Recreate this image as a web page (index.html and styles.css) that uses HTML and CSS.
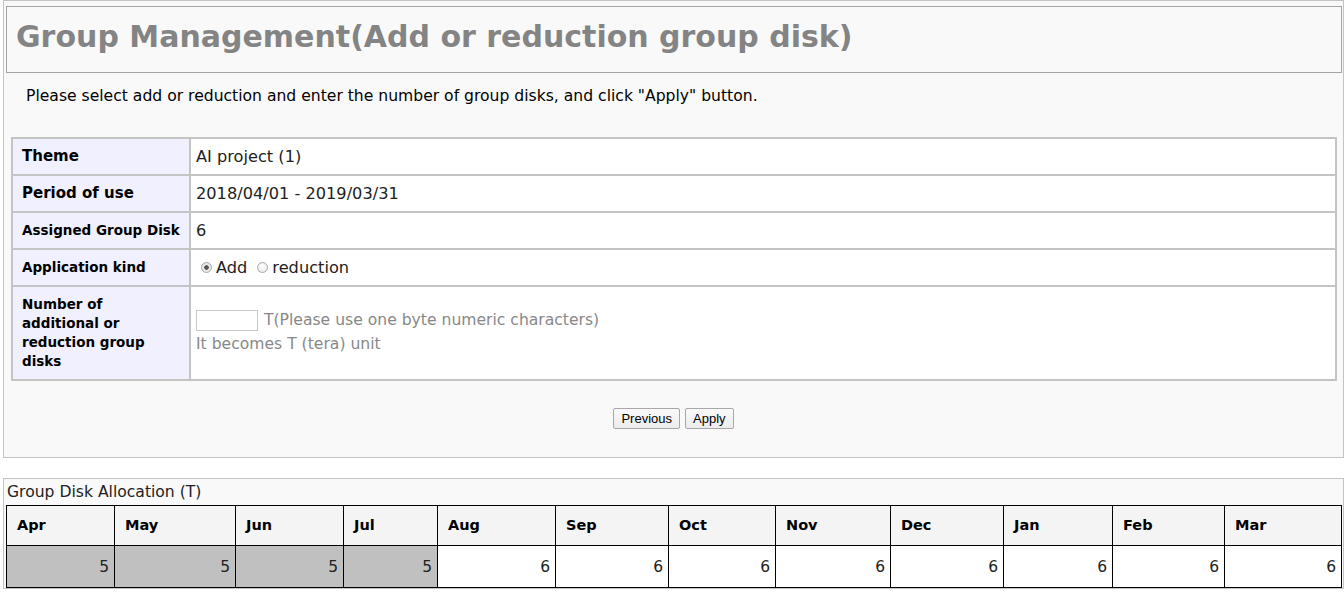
FILE: index.html
```html
<!DOCTYPE html>
<html lang="en">
<head>
<meta charset="utf-8">
<title>Group Management</title>
<link rel="stylesheet" href="styles.css">
</head>
<body>
<div class="panel main">
  <div class="title-box"><h1 class="title">Group Management(Add or reduction group disk)</h1></div>
  <p class="lead">Please select add or reduction and enter the number of group disks, and click "Apply" button.</p>
  <table class="form">
    <tr><th class="lg">Theme</th><td>AI project (1)</td></tr>
    <tr><th class="lg">Period of use</th><td>2018/04/01 - 2019/03/31</td></tr>
    <tr><th>Assigned Group Disk</th><td>6</td></tr>
    <tr><th>Application kind</th><td><label class="opt"><input type="radio" name="kind" class="radio" checked>Add</label><label class="opt"><input type="radio" name="kind" class="radio">reduction</label></td></tr>
    <tr><th class="multi">Number of<br>additional or<br>reduction group<br>disks</th>
      <td class="note"><div class="num-line"><input type="text" class="num">T(Please use one byte numeric characters)</div><div>It becomes T (tera) unit</div></td></tr>
  </table>
  <div class="actions"><button class="btn">Previous</button><button class="btn">Apply</button></div>
</div>
<div class="panel alloc">
  <div class="caption">Group Disk Allocation (T)</div>
  <table class="months">
    <colgroup><col><col><col><col><col><col><col><col><col><col><col><col></colgroup>
    <tr><th>Apr</th><th>May</th><th>Jun</th><th>Jul</th><th>Aug</th><th>Sep</th><th>Oct</th><th>Nov</th><th>Dec</th><th>Jan</th><th>Feb</th><th>Mar</th></tr>
    <tr><td class="past">5</td><td class="past">5</td><td class="past">5</td><td class="past">5</td><td>6</td><td>6</td><td>6</td><td>6</td><td>6</td><td>6</td><td>6</td><td>6</td></tr>
  </table>
</div>
</body>
</html>
```
FILE: styles.css
```css
html, body { margin: 0; padding: 0; background: #fff; }
body { font-family: "DejaVu Sans", Verdana, sans-serif; color: #000; }

.panel {
  margin-left: 3px;
  width: calc(100% - 3px);
  box-sizing: border-box;
  border: 1px solid #c4c4c4;
  background: #f9f9f9;
}

.main { padding-bottom: 28px; }

.title-box {
  margin: 5px 1px 0 2px;
  border: 1px solid #a4a4a4;
  box-sizing: content-box;
  display: flex;
  align-items: center;
  padding: 0 0 6px 9px;
  height: 59px;
}
.title {
  margin: 0;
  font-size: 30px;
  font-weight: bold;
  color: #848484;
  line-height: 36px;
}

.lead {
  margin: 13px 0 0 22px;
  font-size: 15.6px;
  line-height: 20px;
}

.form {
  margin: 31px 0 0 7px;
  width: calc(100% - 13px);
  border: 1px solid #c4c4c4;
  border-spacing: 0;
  background: #fff;
}
.form th, .form td {
  border: 1px solid #c4c4c4;
  line-height: 19px;
  padding: 8px 5px;
  text-align: left;
  vertical-align: middle;
}
.form th {
  box-sizing: border-box;
  width: 178px;
  background: #f0f0ff;
  font-size: 13.5px;
  font-weight: bold;
  padding-left: 9px;
}
.form th.lg { font-size: 15px; }
.form td { font-size: 16.2px; color: #222; }

.opt { display: inline-flex; align-items: center; margin-right: 5px; }
.radio {
  appearance: none;
  -webkit-appearance: none;
  width: 11px; height: 11px;
  margin: 0 4px 0 5px;
  border: 1px solid #a8a8a8;
  border-radius: 50%;
  background: radial-gradient(circle at 50% 40%, #fff, #e4e4e4);
  box-sizing: border-box;
}
.radio:checked {
  background: radial-gradient(circle, #555 0 2px, #e8e8e8 2.5px);
}

.form td.note { color: #888; font-size: 15.6px; padding-bottom: 12px; }
.note .num-line { margin-bottom: 4px; line-height: 22px; }
.num {
  width: 62px; height: 21px;
  box-sizing: border-box;
  border: 1px solid #c8c8c8;
  margin: 0 6px 0 0;
  padding: 0;
  vertical-align: middle;
}

.actions {
  margin-top: 27px;
  display: flex;
  justify-content: center;
  gap: 5px;
}
.btn {
  font-family: "Liberation Sans", Arial, sans-serif;
  font-size: 13px;
  height: 21px;
  padding: 0 7px;
  border: 1px solid #a8a8a8;
  border-radius: 2px;
  background: linear-gradient(#fafafa, #ececec);
  color: #000;
}

.alloc { margin-top: 20px; }
.caption {
  padding: 3px 3px;
  font-size: 15.6px;
  line-height: 20px;
  color: #222;
}
.months {
  margin-left: 2px;
  width: calc(100% - 3px);
  border-collapse: collapse;
  table-layout: fixed;
  background: #fff;
}
.months col:nth-child(1) { width: 108px; }
.months col:nth-child(2) { width: 121px; }
.months col:nth-child(3) { width: 108px; }
.months col:nth-child(4) { width: 94px; }
.months col:nth-child(5) { width: 118px; }
.months col:nth-child(6) { width: 113px; }
.months col:nth-child(7) { width: 107px; }
.months col:nth-child(8) { width: 115px; }
.months col:nth-child(9) { width: 113px; }
.months col:nth-child(10) { width: 109px; }
.months col:nth-child(11) { width: 112px; }
.months col:nth-child(12) { width: 117px; }
.months th, .months td {
  border: 1px solid #000;
  font-size: 14.5px;
  line-height: 20px;
}
.months th {
  background: #f4f4f4;
  text-align: left;
  padding: 9px 10px 10px;
  font-weight: bold;
}
.months td {
  text-align: right;
  padding: 11px 5px 10px;
  font-size: 15.5px;
  color: #222;
}
.months td.past { background: #c0c0c0; }
```
